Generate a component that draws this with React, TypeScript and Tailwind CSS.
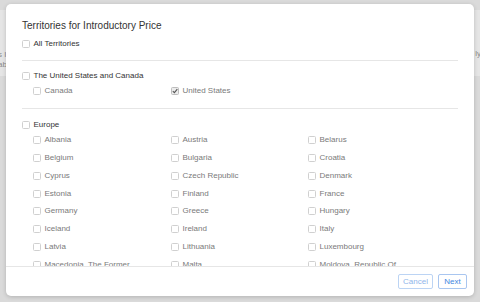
import React from 'react';

type Item = { name: string; checked?: boolean };

const europe: string[] = [
  'Albania', 'Austria', 'Belarus',
  'Belgium', 'Bulgaria', 'Croatia',
  'Cyprus', 'Czech Republic', 'Denmark',
  'Estonia', 'Finland', 'France',
  'Germany', 'Greece', 'Hungary',
  'Iceland', 'Ireland', 'Italy',
  'Latvia', 'Lithuania', 'Luxembourg',
  'Macedonia, The Former Yugoslav Republic Of', 'Malta', 'Moldova, Republic Of',
  'Montenegro', 'Netherlands', 'Norway',
];

const Box: React.FC<{ checked?: boolean }> = ({ checked }) => (
  <span
    className={
      checked
        ? 'w-[8px] h-[8px] shrink-0 rounded-[1.5px] border border-[#bdbdbd] bg-[#ececec] flex items-center justify-center'
        : 'block w-[8px] h-[8px] shrink-0 rounded-[1.5px] border border-[#d0d0d0] bg-white'
    }
  >
    {checked && (
      <svg width="6" height="6" viewBox="0 0 6 6">
        <path d="M0.8 3.1 L2.4 4.6 L5.3 1.2" fill="none" stroke="#555" strokeWidth="1.1" />
      </svg>
    )}
  </span>
);

const Header: React.FC<{ label: string }> = ({ label }) => (
  <div className="h-[13px] flex items-center gap-[3.5px] text-[8px] text-[#333]">
    <Box />
    <span className="whitespace-nowrap">{label}</span>
  </div>
);

const Grid: React.FC<{ items: Item[] }> = ({ items }) => (
  <div className="grid grid-cols-[138px_137px_1fr] pl-[11px]">
    {items.map((it) => (
      <div key={it.name} className="min-h-[17.8px] flex items-start pt-[3.5px] gap-[3.5px] text-[8px] leading-[10px] text-[#7a7a7a]">
        <span className="flex shrink-0 mt-[1px]">
          <Box checked={it.checked} />
        </span>
        <span className="max-w-[116px]">{it.name}</span>
      </div>
    ))}
  </div>
);

const App: React.FC = () => {
  return (
    <div className="relative w-[480px] h-[302px] overflow-hidden bg-[#dadada] font-['Liberation_Sans',Arial,sans-serif]">
      {/* page behind the sheet */}
      <div className="mt-[10px] h-[66px] bg-[#e5e5e5] flex justify-between text-[8px] text-[#8a8a8a] leading-[10px]">
        <div className="pt-[40px] -ml-[2px]">
          <div>s I</div>
          <div>ab</div>
        </div>
        <div className="pt-[39px] -mr-[1px]">ly</div>
      </div>

      {/* sheet */}
      <div className="absolute left-[6px] top-[4px] w-[468px] h-[292px] bg-white rounded-[5px] shadow-[0_1px_4px_rgba(0,0,0,0.18)] flex flex-col">
        <div className="flex-1 overflow-hidden px-[16px]">
          <div className="mt-[14px] h-[14px] flex items-center text-[10px] text-[#333]">
            Territories for Introductory Price
          </div>
          <div className="mt-[5.5px]">
            <Header label="All Territories" />
          </div>
          <div className="mt-[9px] h-px bg-[#e6e6e6]" />

          <div className="mt-[8.5px]">
            <Header label="The United States and Canada" />
            <Grid items={[{ name: 'Canada' }, { name: 'United States', checked: true }]} />
          </div>
          <div className="mt-[8px] h-px bg-[#e6e6e6]" />

          <div className="mt-[10px]">
            <Header label="Europe" />
            <Grid items={europe.map((name) => ({ name }))} />
          </div>
        </div>

        <div className="h-[30px] shrink-0 border-t border-[#e6e6e6] flex justify-end items-start pt-[7px] pr-[7px] gap-[5px]">
          <button className="h-[15px] w-[35px] rounded-[2px] border border-[#bcd4f4] text-[8px] text-[#8fb5ea] bg-white">
            Cancel
          </button>
          <button className="h-[15px] w-[29px] rounded-[2px] border border-[#a9c6f0] text-[8px] text-[#3f86e0] bg-white">
            Next
          </button>
        </div>
      </div>
    </div>
  );
};

export default App;
